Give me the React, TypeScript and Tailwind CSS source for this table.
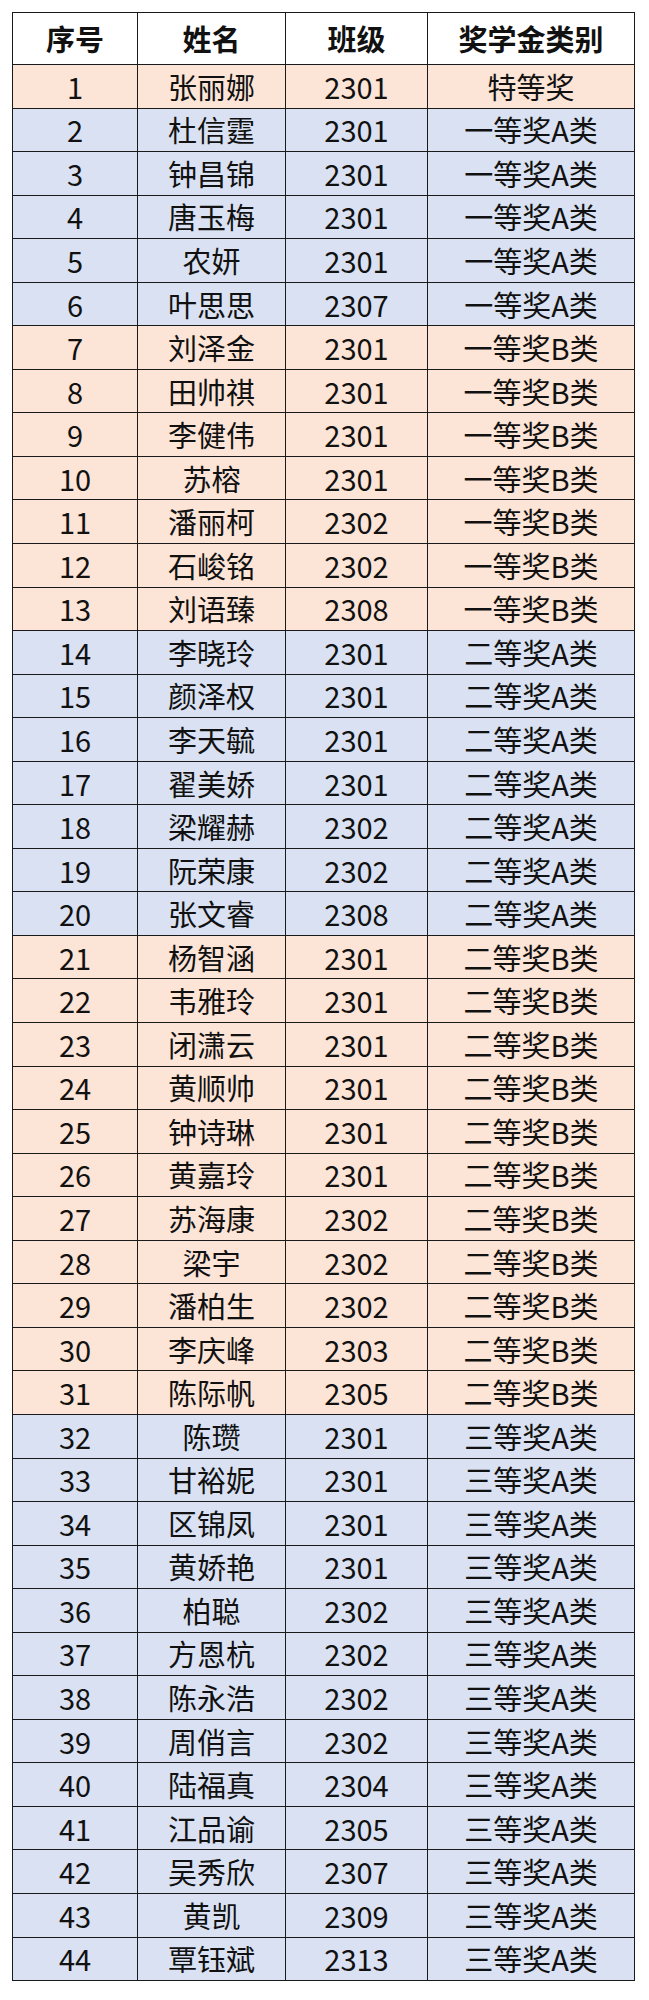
const rows: [string, string, string][] = [
  ["张丽娜", "2301", "特等奖"],
  ["杜信霆", "2301", "一等奖A类"],
  ["钟昌锦", "2301", "一等奖A类"],
  ["唐玉梅", "2301", "一等奖A类"],
  ["农妍", "2301", "一等奖A类"],
  ["叶思思", "2307", "一等奖A类"],
  ["刘泽金", "2301", "一等奖B类"],
  ["田帅祺", "2301", "一等奖B类"],
  ["李健伟", "2301", "一等奖B类"],
  ["苏榕", "2301", "一等奖B类"],
  ["潘丽柯", "2302", "一等奖B类"],
  ["石峻铭", "2302", "一等奖B类"],
  ["刘语臻", "2308", "一等奖B类"],
  ["李晓玲", "2301", "二等奖A类"],
  ["颜泽权", "2301", "二等奖A类"],
  ["李天毓", "2301", "二等奖A类"],
  ["翟美娇", "2301", "二等奖A类"],
  ["梁耀赫", "2302", "二等奖A类"],
  ["阮荣康", "2302", "二等奖A类"],
  ["张文睿", "2308", "二等奖A类"],
  ["杨智涵", "2301", "二等奖B类"],
  ["韦雅玲", "2301", "二等奖B类"],
  ["闭潇云", "2301", "二等奖B类"],
  ["黄顺帅", "2301", "二等奖B类"],
  ["钟诗琳", "2301", "二等奖B类"],
  ["黄嘉玲", "2301", "二等奖B类"],
  ["苏海康", "2302", "二等奖B类"],
  ["梁宇", "2302", "二等奖B类"],
  ["潘柏生", "2302", "二等奖B类"],
  ["李庆峰", "2303", "二等奖B类"],
  ["陈际帆", "2305", "二等奖B类"],
  ["陈瓒", "2301", "三等奖A类"],
  ["甘裕妮", "2301", "三等奖A类"],
  ["区锦凤", "2301", "三等奖A类"],
  ["黄娇艳", "2301", "三等奖A类"],
  ["柏聪", "2302", "三等奖A类"],
  ["方恩杭", "2302", "三等奖A类"],
  ["陈永浩", "2302", "三等奖A类"],
  ["周俏言", "2302", "三等奖A类"],
  ["陆福真", "2304", "三等奖A类"],
  ["江品谕", "2305", "三等奖A类"],
  ["吴秀欣", "2307", "三等奖A类"],
  ["黄凯", "2309", "三等奖A类"],
  ["覃钰斌", "2313", "三等奖A类"],
];

// peach for 特等 / B类 groups, blue for A类 groups
const isPeach = (i: number) => i === 0 || (i >= 6 && i <= 12) || (i >= 20 && i <= 30);

const cell = "border-[1.5px] border-[#1a1a1a] text-center align-middle p-0 leading-none";

export default function App() {
  return (
    <div
      className="w-[649px] min-h-[2000px] bg-white pt-[12px] pl-[12px]"
      style={{ fontFamily: '"Noto Sans CJK SC", "Noto Sans", sans-serif' }}
    >
      <table className="table-fixed border-collapse w-[622px] text-[29px] text-[#111]">
        <colgroup>
          <col className="w-[125px]" />
          <col className="w-[148px]" />
          <col className="w-[142px]" />
          <col className="w-[207px]" />
        </colgroup>
        <thead>
          <tr className="h-[52px] bg-white">
            <th className={`${cell} font-bold`}>序号</th>
            <th className={`${cell} font-bold`}>姓名</th>
            <th className={`${cell} font-bold`}>班级</th>
            <th className={`${cell} font-bold`}>奖学金类别</th>
          </tr>
        </thead>
        <tbody>
          {rows.map(([name, cls, award], i) => (
            <tr key={i} className={`h-[43.55px] ${isPeach(i) ? "bg-[#fce4d6]" : "bg-[#d9e1f2]"}`}>
              <td className={cell}>{i + 1}</td>
              <td className={cell}>{name}</td>
              <td className={cell}>{cls}</td>
              <td className={cell}>{award}</td>
            </tr>
          ))}
        </tbody>
      </table>
    </div>
  );
}
